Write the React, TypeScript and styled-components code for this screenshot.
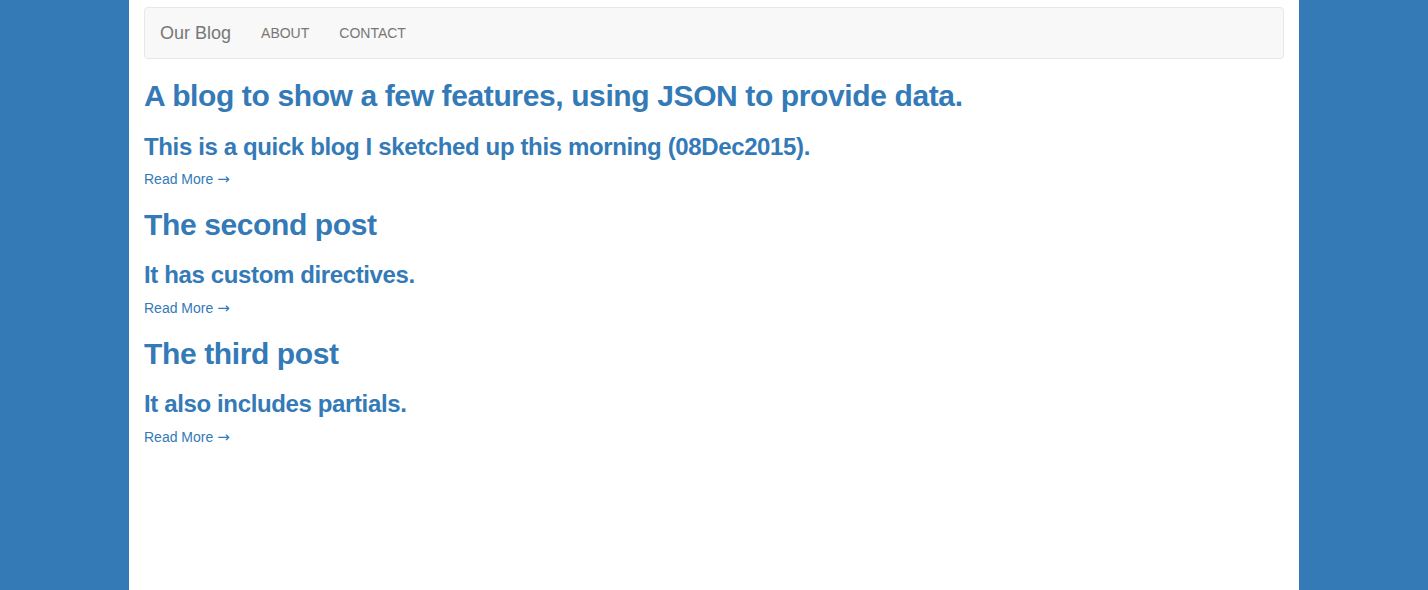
import styled, { createGlobalStyle } from "styled-components";

const GlobalStyle = createGlobalStyle`
  html, body {
    margin: 0;
    padding: 0;
    background-color: #337ab7;
  }
  body {
    font-family: "Liberation Sans", Arial, sans-serif;
    font-size: 14px;
    line-height: 1.42857;
    color: #333;
  }
`;

const Page = styled.div`
  width: 1170px;
  min-height: 100vh;
  margin: 0 auto;
  padding: 7px 15px 20px;
  box-sizing: border-box;
  background-color: #fff;
`;

const Navbar = styled.nav`
  display: flex;
  align-items: center;
  min-height: 50px;
  padding: 0 15px;
  margin-bottom: 20px;
  background-color: #f8f8f8;
  border: 1px solid #e7e7e7;
  border-radius: 4px;
`;

const Brand = styled.a`
  padding: 15px 15px 15px 0;
  font-size: 18px;
  line-height: 20px;
  color: #777;
  text-decoration: none;
`;

const NavLink = styled.a`
  padding: 15px;
  font-size: 14px;
  line-height: 20px;
  color: #777;
  text-transform: uppercase;
  text-decoration: none;
`;

const Post = styled.article``;

const Title = styled.h2`
  margin: 18px 0 10px;
  font-size: 30px;
  font-weight: 700;
  letter-spacing: -0.38px;
  line-height: 1.1;
  color: #337ab7;
`;

const Subtitle = styled.h3`
  margin: 21.5px 0 10px;
  font-size: 24px;
  font-weight: 700;
  letter-spacing: -0.37px;
  line-height: 1.1;
  color: #337ab7;
`;

const More = styled.p`
  margin: 0 0 10px;
  a {
    color: #337ab7;
    text-decoration: none;
  }
`;

const Arrow = styled.span`
  font-family: "DejaVu Sans", sans-serif;
  font-size: 15px;
  line-height: 0;
`;

const posts = [
  {
    title: "A blog to show a few features, using JSON to provide data.",
    summary: "This is a quick blog I sketched up this morning (08Dec2015).",
  },
  { title: "The second post", summary: "It has custom directives." },
  { title: "The third post", summary: "It also includes partials." },
];

export default function App() {
  return (
    <>
      <GlobalStyle />
      <Page>
        <Navbar>
          <Brand href="#">Our Blog</Brand>
          <NavLink href="#">About</NavLink>
          <NavLink href="#">Contact</NavLink>
        </Navbar>
        {posts.map((post) => (
          <Post key={post.title}>
            <Title>{post.title}</Title>
            <Subtitle>{post.summary}</Subtitle>
            <More>
              <a href="#">
                Read More <Arrow>→</Arrow>
              </a>
            </More>
          </Post>
        ))}
      </Page>
    </>
  );
}
